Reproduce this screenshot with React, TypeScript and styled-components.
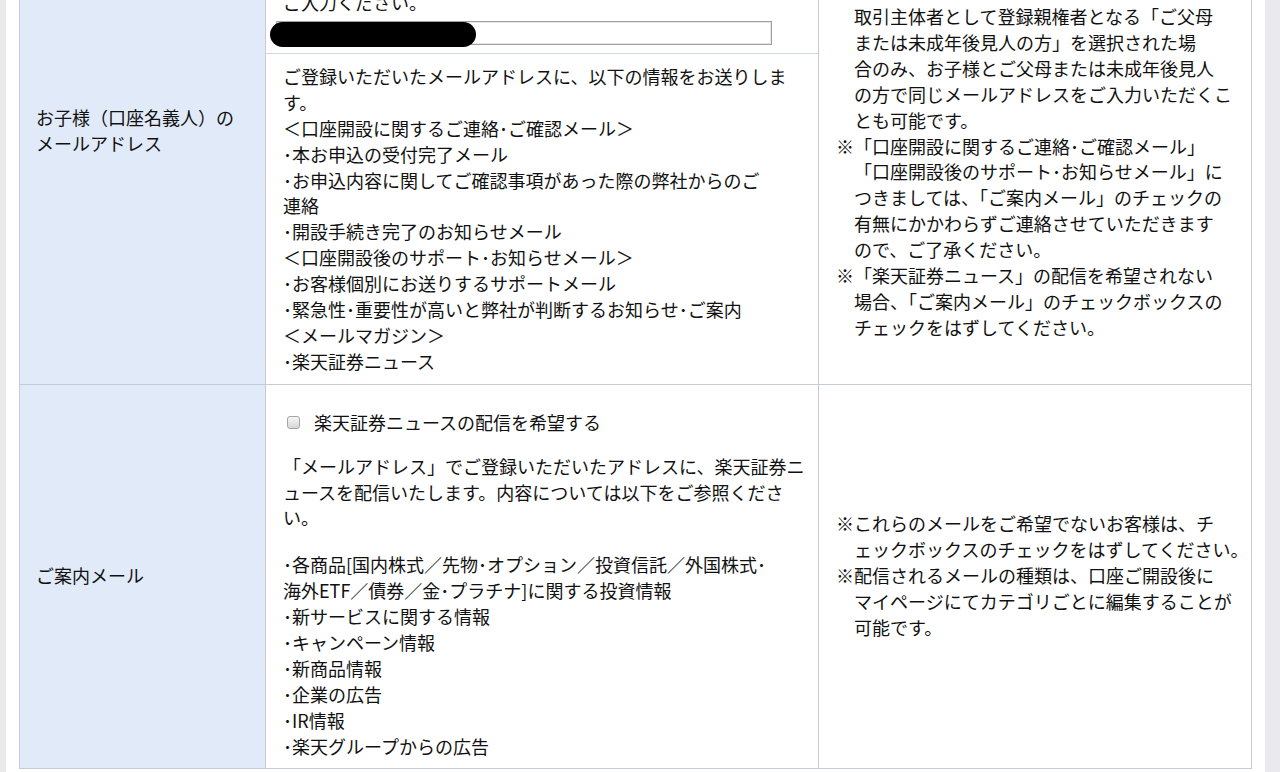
import React from "react";
import styled, { createGlobalStyle } from "styled-components";

const GlobalStyle = createGlobalStyle`
  html, body {
    margin: 0;
    padding: 0;
    background: #e9e9ee;
  }
  body {
    font-family: "Noto Sans CJK JP", "Noto Sans", sans-serif;
    color: #111111;
  }
`;

const Sheet = styled.div`
  margin: -24px 15px 0 6px;
  padding: 0 13px 3px;
  background: #ffffff;
  min-height: calc(100vh + 24px);
  box-sizing: border-box;
`;

const Table = styled.div`
  display: grid;
  grid-template-columns: 245px 552px 432px;
  gap: 1px;
  background: #c4ccd6;
  border: 1px solid #c4ccd6;
  font-size: 18px;
  line-height: 25.9px;
`;

const LabelCell = styled.div<{ $lift?: number }>`
  background: #e1eaf8;
  display: flex;
  align-items: center;
  padding: 0 16px ${(p) => p.$lift ?? 0}px;
  white-space: nowrap;
`;

const MidCell = styled.div`
  background: #ffffff;
  display: flex;
  flex-direction: column;
`;

const InputBlock = styled.div`
  padding: 13px 10px 8px;
  border-bottom: 1px solid #d3d8de;
`;

const Prompt = styled.p`
  margin: 0;
  padding-left: 7px;
  white-space: nowrap;
`;

const FieldWrap = styled.div`
  position: relative;
  margin-top: 5px;
  width: 496px;
  height: 24px;
`;

const EmailInput = styled.input`
  box-sizing: border-box;
  display: block;
  width: 100%;
  height: 100%;
  margin: 0;
  border: 1px solid #9ba1a7;
  box-shadow: inset 0 0 0 1px #e4e6e9;
  background: #fff;
  outline: none;
`;

const Redaction = styled.span`
  position: absolute;
  left: -6px;
  top: 1px;
  width: 206px;
  height: 25px;
  border-radius: 13px;
  background: #000;
`;

const InfoBlock = styled.div`
  padding: 10px 17px 9px;
  white-space: nowrap;
`;

const ConsentBlock = styled.div`
  padding: 25px 17px 8px;
  white-space: nowrap;
`;

const CheckRow = styled.label`
  display: flex;
  align-items: center;
  gap: 14px;
  height: 25.9px;
  padding-left: 4px;
`;

const Checkbox = styled.input.attrs({ type: "checkbox" })`
  appearance: none;
  -webkit-appearance: none;
  box-sizing: border-box;
  flex: none;
  width: 13px;
  height: 13px;
  margin: 0;
  border: 1px solid #a4a4a4;
  border-radius: 3px;
  background: linear-gradient(#f6f6f6, #d6d6d6);
`;

const Para = styled.p<{ $gap?: number }>`
  margin: ${(p) => p.$gap ?? 0}px 0 0;
`;

const NoteCell = styled.div<{ $top?: number }>`
  background: #ffffff;
  display: flex;
  flex-direction: column;
  justify-content: ${(p) => (p.$top != null ? "flex-start" : "center")};
  padding: ${(p) => (p.$top != null ? `${p.$top}px 16px 0 17px` : "0 16px 0 17px")};
  white-space: nowrap;
`;

const Note = styled.p<{ $cont?: boolean }>`
  margin: 0;
  padding-left: 18px;
  text-indent: ${(p) => (p.$cont ? "0" : "-18px")};
`;

const Lines: React.FC<{ lines: string[] }> = ({ lines }) => (
  <>
    {lines.map((l, i) => (
      <React.Fragment key={i}>
        {i > 0 && <br />}
        {l}
      </React.Fragment>
    ))}
  </>
);

const mailInfo = [
  "ご登録いただいたメールアドレスに、以下の情報をお送りしま",
  "す。",
  "＜口座開設に関するご連絡･ご確認メール＞",
  "･本お申込の受付完了メール",
  "･お申込内容に関してご確認事項があった際の弊社からのご",
  "連絡",
  "･開設手続き完了のお知らせメール",
  "＜口座開設後のサポート･お知らせメール＞",
  "･お客様個別にお送りするサポートメール",
  "･緊急性･重要性が高いと弊社が判断するお知らせ･ご案内",
  "＜メールマガジン＞",
  "･楽天証券ニュース",
];

const newsIntro = [
  "「メールアドレス」でご登録いただいたアドレスに、楽天証券ニ",
  "ュースを配信いたします。内容については以下をご参照くださ",
  "い。",
];

const newsList = [
  "･各商品[国内株式／先物･オプション／投資信託／外国株式･",
  "海外ETF／債券／金･プラチナ]に関する投資情報",
  "･新サービスに関する情報",
  "･キャンペーン情報",
  "･新商品情報",
  "･企業の広告",
  "･IR情報",
  "･楽天グループからの広告",
];

export default function App() {
  return (
    <>
      <GlobalStyle />
      <Sheet>
        <Table>
          <LabelCell $lift={99}>
            <div>
              お子様（口座名義人）の
              <br />
              メールアドレス
            </div>
          </LabelCell>
          <MidCell>
            <InputBlock>
              <Prompt>ご入力ください。</Prompt>
              <FieldWrap>
                <EmailInput type="text" aria-label="メールアドレス" />
                <Redaction />
              </FieldWrap>
            </InputBlock>
            <InfoBlock>
              <Lines lines={mailInfo} />
            </InfoBlock>
          </MidCell>
          <NoteCell $top={27}>
            <Note $cont>
              <Lines
                lines={[
                  "取引主体者として登録親権者となる「ご父母",
                  "または未成年後見人の方」を選択された場",
                  "合のみ、お子様とご父母または未成年後見人",
                  "の方で同じメールアドレスをご入力いただくこ",
                  "とも可能です。",
                ]}
              />
            </Note>
            <Note>
              <Lines
                lines={[
                  "※「口座開設に関するご連絡･ご確認メール」",
                  "「口座開設後のサポート･お知らせメール」に",
                  "つきましては、「ご案内メール」のチェックの",
                  "有無にかかわらずご連絡させていただきます",
                  "ので、ご了承ください。",
                ]}
              />
            </Note>
            <Note>
              <Lines
                lines={[
                  "※「楽天証券ニュース」の配信を希望されない",
                  "場合、「ご案内メール」のチェックボックスの",
                  "チェックをはずしてください。",
                ]}
              />
            </Note>
          </NoteCell>

          <LabelCell>ご案内メール</LabelCell>
          <MidCell>
            <ConsentBlock>
              <CheckRow>
                <Checkbox />
                <span>楽天証券ニュースの配信を希望する</span>
              </CheckRow>
              <Para $gap={18}>
                <Lines lines={newsIntro} />
              </Para>
              <Para $gap={21}>
                <Lines lines={newsList} />
              </Para>
            </ConsentBlock>
          </MidCell>
          <NoteCell>
            <Note>
              <Lines
                lines={[
                  "※これらのメールをご希望でないお客様は、チ",
                  "ェックボックスのチェックをはずしてください。",
                ]}
              />
            </Note>
            <Note>
              <Lines
                lines={[
                  "※配信されるメールの種類は、口座ご開設後に",
                  "マイページにてカテゴリごとに編集することが",
                  "可能です。",
                ]}
              />
            </Note>
          </NoteCell>
        </Table>
      </Sheet>
    </>
  );
}
